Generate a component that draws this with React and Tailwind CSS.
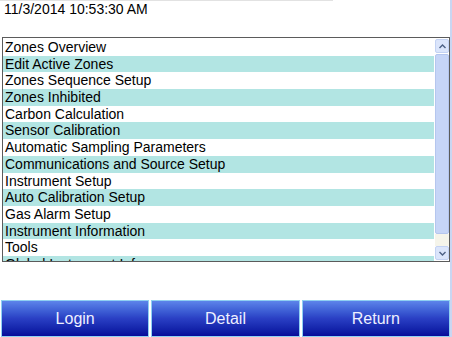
import React from "react";

const items = [
  "Zones Overview",
  "Edit Active Zones",
  "Zones Sequence Setup",
  "Zones Inhibited",
  "Carbon Calculation",
  "Sensor Calibration",
  "Automatic Sampling Parameters",
  "Communications and Source Setup",
  "Instrument Setup",
  "Auto Calibration Setup",
  "Gas Alarm Setup",
  "Instrument Information",
  "Tools",
  "Global Instrument Info",
];

function Btn({ children }) {
  return (
    <div className="flex-1 flex items-center justify-center border border-[#8fd0f2] bg-gradient-to-b from-[#5d84ea] via-[#2a3fc4] to-[#08089a] text-[16px] text-[#eef0ff]">
      {children}
    </div>
  );
}

export default function App() {
  return (
    <div
      className="w-[452px] h-[337px] bg-white relative overflow-hidden flex flex-col text-black"
      style={{ fontFamily: '"Liberation Sans", Arial, sans-serif' }}
    >
      <div className="absolute top-0 left-0 w-[333px] h-px bg-[#e2e2e2]" />
      <div className="absolute top-0 right-0 w-[2px] h-full bg-[#c9d6f2]" />
      <div className="h-[37px] pl-[4px] pt-[1px] text-[14px] leading-[16px]">
        11/3/2014 10:53:30 AM
      </div>
      <div className="ml-[2px] w-[448px] h-[225px] border border-[#5b5b5b] flex">
        <div className="flex-1 overflow-hidden pt-px">
          {items.map((t, i) => (
            <div
              key={t}
              className={
                "h-[16.7px] leading-[16.7px] pl-[2px] text-[14px] whitespace-nowrap " +
                (i % 2 === 1 ? "bg-[#b2e5e3]" : "")
              }
            >
              {t}
            </div>
          ))}
        </div>
        <div className="w-[14px] ml-[1px] flex flex-col pt-px pb-px">
          <div className="h-[14px] rounded-[2px] bg-[#dbe5fb] border border-[#c3d2f3] flex items-center justify-center">
            <svg width="7" height="5" viewBox="0 0 7 5">
              <path d="M0.5 4 L3.5 1 L6.5 4" fill="none" stroke="#4d6185" strokeWidth="1.4" />
            </svg>
          </div>
          <div className="h-[180px] mt-px rounded-[2px] bg-[#c6d5f7] border border-[#b5c6ee]" />
          <div className="flex-1 bg-[#f5f4ea]" />
          <div className="h-[14px] rounded-[2px] bg-[#dbe5fb] border border-[#c3d2f3] flex items-center justify-center">
            <svg width="7" height="5" viewBox="0 0 7 5">
              <path d="M0.5 1 L3.5 4 L6.5 1" fill="none" stroke="#4d6185" strokeWidth="1.4" />
            </svg>
          </div>
        </div>
      </div>
      <div className="h-[38px]" />
      <div className="h-[37px] flex gap-[2px] pl-[1px] pr-[2px]">
        <Btn>Login</Btn>
        <Btn>Detail</Btn>
        <Btn>Return</Btn>
      </div>
    </div>
  );
}
